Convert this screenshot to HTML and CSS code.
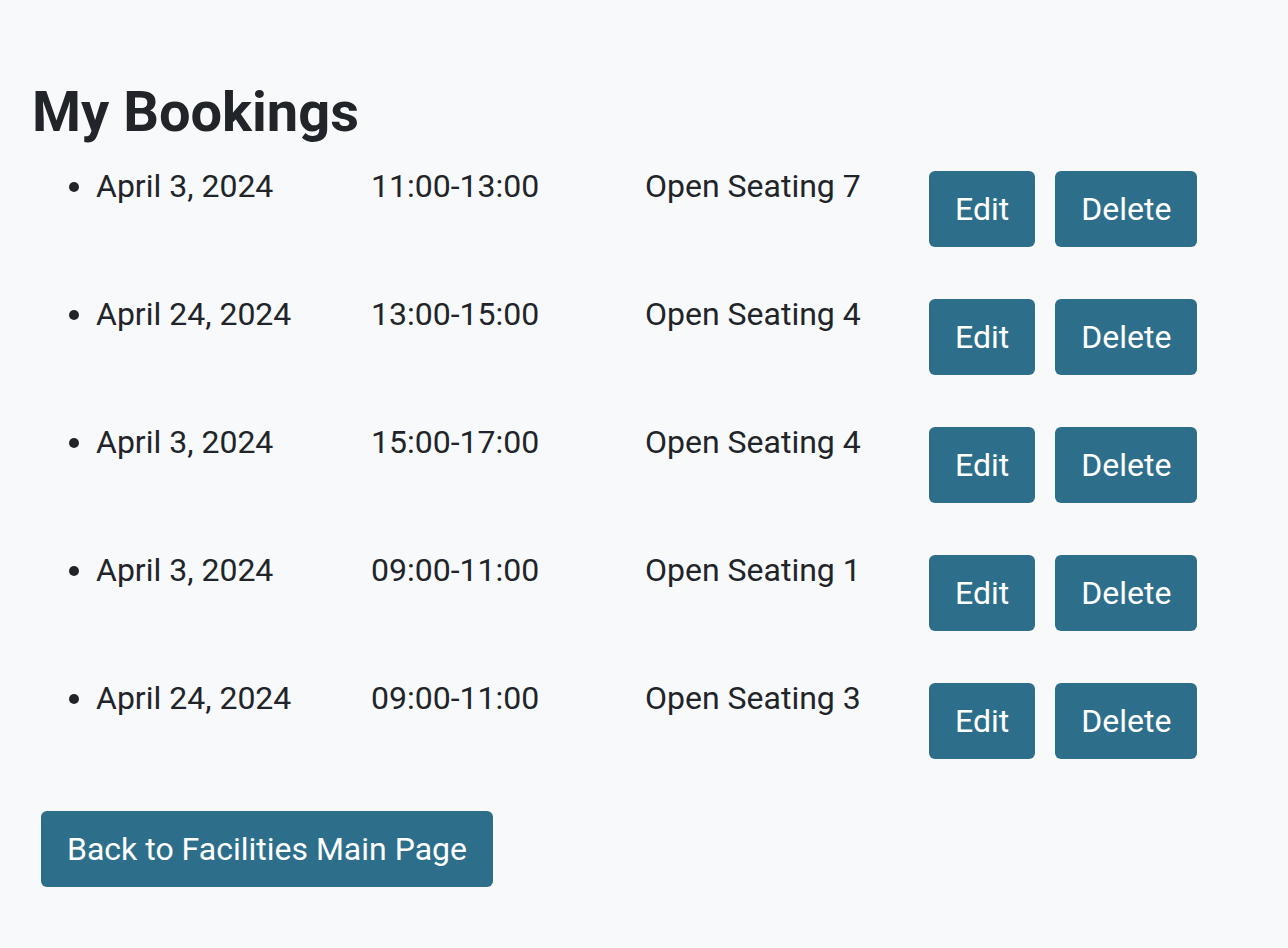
FILE: index.html
```html
<!DOCTYPE html>
<html lang="en">
<head>
<meta charset="utf-8">
<title>My Bookings</title>
<link rel="stylesheet" href="styles.css">
</head>
<body>
<main class="page">
  <h1 class="title">My Bookings</h1>
  <ul class="bookings">
    <li class="booking">
      <div class="row">
        <span class="date">April 3, 2024</span>
        <span class="time">11:00-13:00</span>
        <span class="seat">Open Seating 7</span>
        <span class="actions"><button class="btn">Edit</button><button class="btn">Delete</button></span>
      </div>
    </li>
    <li class="booking">
      <div class="row">
        <span class="date">April 24, 2024</span>
        <span class="time">13:00-15:00</span>
        <span class="seat">Open Seating 4</span>
        <span class="actions"><button class="btn">Edit</button><button class="btn">Delete</button></span>
      </div>
    </li>
    <li class="booking">
      <div class="row">
        <span class="date">April 3, 2024</span>
        <span class="time">15:00-17:00</span>
        <span class="seat">Open Seating 4</span>
        <span class="actions"><button class="btn">Edit</button><button class="btn">Delete</button></span>
      </div>
    </li>
    <li class="booking">
      <div class="row">
        <span class="date">April 3, 2024</span>
        <span class="time">09:00-11:00</span>
        <span class="seat">Open Seating 1</span>
        <span class="actions"><button class="btn">Edit</button><button class="btn">Delete</button></span>
      </div>
    </li>
    <li class="booking">
      <div class="row">
        <span class="date">April 24, 2024</span>
        <span class="time">09:00-11:00</span>
        <span class="seat">Open Seating 3</span>
        <span class="actions"><button class="btn">Edit</button><button class="btn">Delete</button></span>
      </div>
    </li>
  </ul>
  <button class="btn btn-back">Back to Facilities Main Page</button>
</main>
</body>
</html>
```

FILE: styles.css
```css
html, body {
  margin: 0;
  padding: 0;
  background: #f8f9fa;
}
body {
  font-family: Roboto, "Liberation Sans", sans-serif;
  color: #212529;
  font-size: 32px;
  line-height: 1.5;
}
.page {
  padding: 79px 30px 40px 30px;
}
.title {
  margin: 0 0 0 2px;
  font-size: 56px;
  font-weight: 700;
  line-height: 1.2;
}
.bookings {
  margin: 16px 0 0 0;
  padding: 0 0 0 66px;
}
.booking {
  list-style: disc;
  margin-bottom: 43px;
}
.row {
  display: flex;
  align-items: flex-start;
}
.date { width: 275px; }
.time { width: 274px; }
.seat { width: 284px; }
.actions {
  display: flex;
  gap: 20px;
  margin-top: 9px;
}
.btn {
  font-family: inherit;
  font-size: 32px;
  line-height: 1.5;
  color: #fff;
  background: #2d6f8b;
  border: 0;
  border-radius: 6px;
  padding: 14px 26px;
  height: 76px;
  cursor: pointer;
}
.btn-back {
  margin-left: 11px;
  margin-top: 9px;
}
```
